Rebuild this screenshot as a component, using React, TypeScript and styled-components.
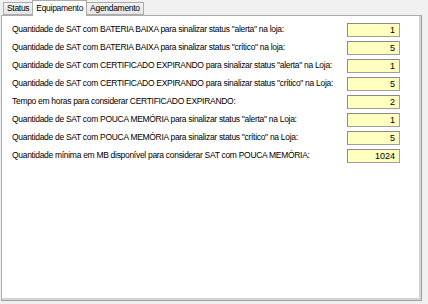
import React from 'react';
import styled, { createGlobalStyle } from 'styled-components';

const uiFont = `"Liberation Sans", Arial, sans-serif`;

const GlobalStyle = createGlobalStyle`
  html, body {
    margin: 0;
    padding: 0;
    background: #f0f0f0;
  }
  body {
    font-family: ${uiFont};
    font-size: 8.5px;
    letter-spacing: -0.3px;
    color: #000;
  }
`;

const Window = styled.div`
  width: 428px;
  height: 304px;
  box-sizing: border-box;
  padding: 0 0 0 1px;
  background: #f0f0f0;
  display: flex;
  flex-direction: column;
`;

const TabStrip = styled.div`
  display: flex;
  align-items: flex-end;
  height: 15px;
  padding-left: 2px;
  position: relative;
  z-index: 1;
`;

const Tab = styled.div<{ active?: boolean }>`
  box-sizing: border-box;
  height: ${p => (p.active ? '16px' : '13px')};
  margin-bottom: ${p => (p.active ? '-1px' : '0')};
  padding: 0 3px;
  padding-top: ${p => (p.active ? '2px' : '0')};
  border: 1px solid #acacac;
  border-bottom: ${p => (p.active ? 'none' : '1px solid #acacac')};
  background: ${p => (p.active ? '#fff' : 'linear-gradient(#f2f2f2, #e5e5e5)')};
  display: flex;
  align-items: ${p => (p.active ? 'flex-start' : 'center')};
  line-height: 11px;
  white-space: nowrap;
  & + & {
    margin-left: -1px;
  }
`;

const Panel = styled.div`
  box-sizing: border-box;
  width: 421px;
  height: 286px;
  background: #fff;
  border: 1px solid #acacac;
  border-right-color: #a0a0a0;
  border-bottom-color: #a0a0a0;
  box-shadow: inset -2px -2px 0 #d4d4d4;
  padding: 7px 0 0 10px;
  display: flex;
  flex-direction: column;
  gap: 5px;
`;

const Row = styled.div`
  display: flex;
  align-items: center;
  width: 388px;
  height: 13px;
`;

const Label = styled.span`
  flex: 1;
  min-width: 0;
  line-height: 13px;
  white-space: nowrap;
`;

const NumberBox = styled.input`
  box-sizing: border-box;
  flex: none;
  width: 53px;
  height: 14px;
  margin: 0;
  padding: 0 4px 0 0;
  border: 1px solid #a0a0a0;
  border-top-color: #8a8a8a;
  border-left-color: #8a8a8a;
  background: #ffffc0;
  font-family: ${uiFont};
  font-size: 9px;
  text-align: right;
  color: #000;
  outline: none;
`;

const settings = [
  { label: 'Quantidade de SAT com BATERIA BAIXA para sinalizar status "alerta" na loja:', value: '1' },
  { label: 'Quantidade de SAT com BATERIA BAIXA para sinalizar status "crítico" na loja:', value: '5' },
  { label: 'Quantidade de SAT com CERTIFICADO EXPIRANDO para sinalizar status "alerta" na Loja:', value: '1' },
  { label: 'Quantidade de SAT com CERTIFICADO EXPIRANDO para sinalizar status "crítico" na Loja:', value: '5' },
  { label: 'Tempo em horas para considerar CERTIFICADO EXPIRANDO:', value: '2' },
  { label: 'Quantidade de SAT com POUCA MEMÓRIA para sinalizar status "alerta" na Loja:', value: '1' },
  { label: 'Quantidade de SAT com POUCA MEMÓRIA para sinalizar status "crítico" na Loja:', value: '5' },
  { label: 'Quantidade mínima em MB disponível para considerar SAT com POUCA MEMÓRIA:', value: '1024' },
];

const App = () => (
  <>
    <GlobalStyle />
    <Window>
      <TabStrip>
        <Tab>Status</Tab>
        <Tab active>Equipamento</Tab>
        <Tab>Agendamento</Tab>
      </TabStrip>
      <Panel>
        {settings.map((s, i) => (
          <Row key={i}>
            <Label>{s.label}</Label>
            <NumberBox defaultValue={s.value} readOnly />
          </Row>
        ))}
      </Panel>
    </Window>
  </>
);

export default App;
